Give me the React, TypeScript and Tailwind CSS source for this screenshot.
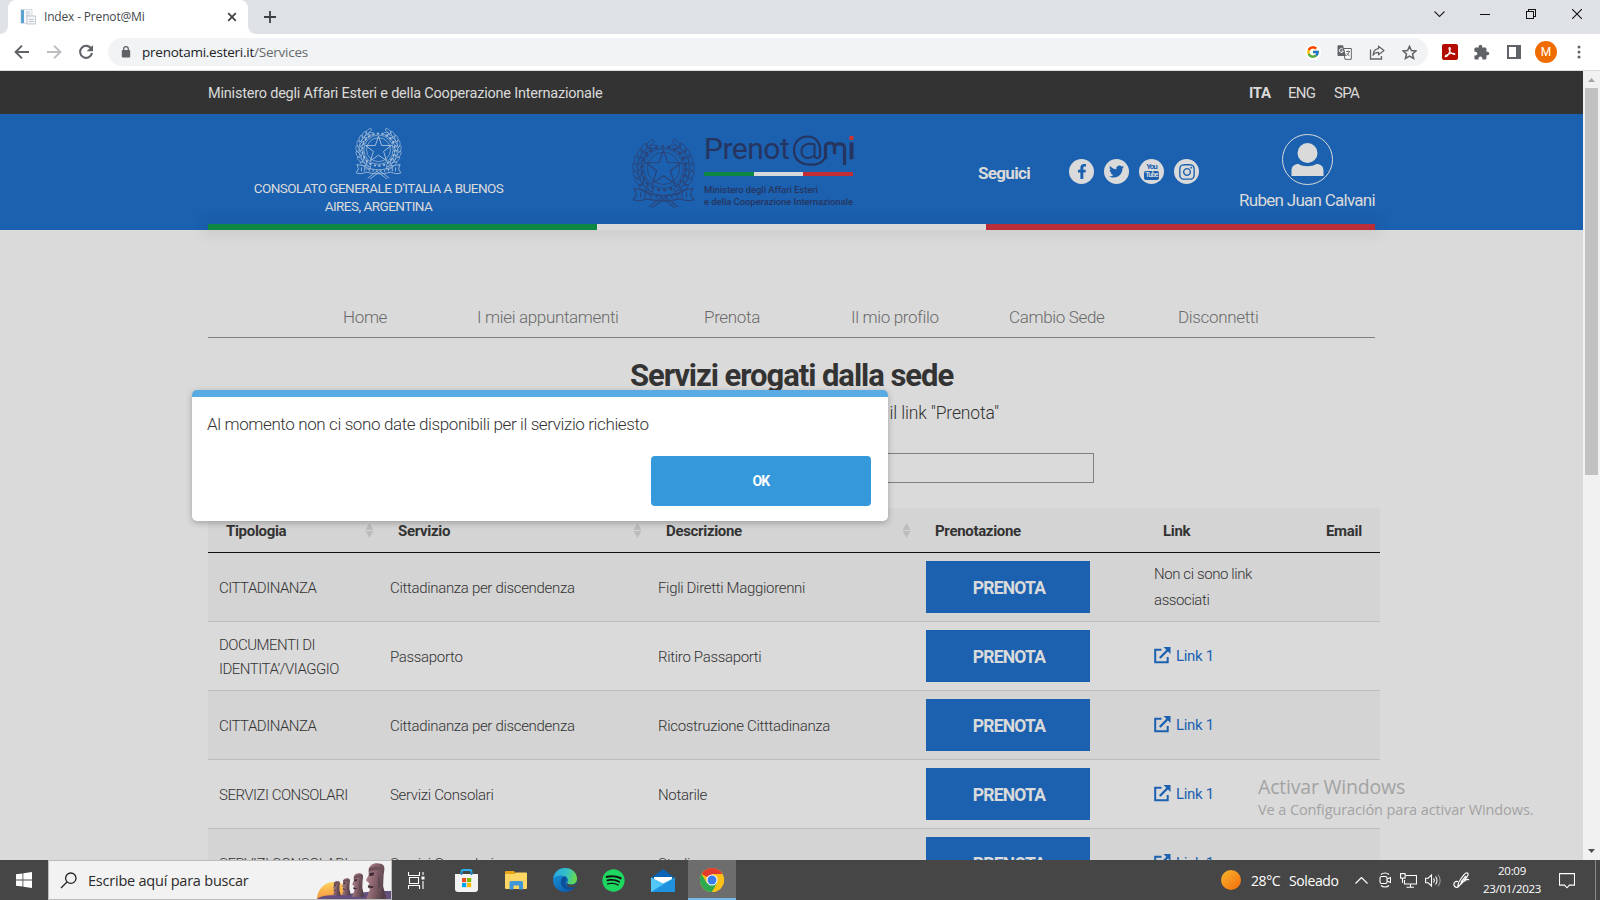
import type { ReactNode } from "react";
import { FaFacebookF, FaTwitter, FaInstagram, FaSpotify } from "react-icons/fa";
import { FcGoogle } from "react-icons/fc";
import { MdExtension } from "react-icons/md";

function BrowserTabs() {
  return (
    <div className="flex h-[34px] shrink-0 items-start bg-[#dee1e6]">
      <div className="flex h-[34px] w-2 items-end bg-white">
        <div className="h-full w-2 rounded-br-lg bg-[#dee1e6]" />
      </div>
      <div className="flex h-[34px] w-[240px] items-center rounded-t-lg bg-white pl-3 pr-[10px]">
        <svg className="h-4 w-4" viewBox="0 0 16 16">
          <rect x="1" y="0.5" width="11" height="14" fill="#f4f6f8" stroke="#c8d0d8" strokeWidth="0.7" />
          <rect x="1" y="1" width="3" height="13" fill="#5ba3d0" />
          <path d="M6 3h4M6 5h4M6 7h3" stroke="#b8c6d4" strokeWidth="0.8" />
          <rect x="7" y="7" width="8.5" height="8" fill="#f4f5f7" stroke="#aeb6c0" strokeWidth="0.7" />
          <path d="M9 10.5h4.5M9 12.5h4.5" stroke="#b0bcc8" strokeWidth="0.8" />
        </svg>
        <span className="ml-2 flex-1 text-[12px] tracking-[-0.17px] text-[#45494d]">Index - Prenot@Mi</span>
        <svg className="mr-[1px] h-[10px] w-[10px]" viewBox="0 0 10 10">
          <path d="M1.2 1.2l7.6 7.6M8.8 1.2L1.2 8.8" stroke="#3c4043" strokeWidth="1.7" />
        </svg>
      </div>
      <div className="h-[34px] w-2 bg-white">
        <div className="h-full w-2 rounded-bl-lg bg-[#dee1e6]" />
      </div>
      <svg className="ml-2 mt-[11px] h-3 w-3" viewBox="0 0 12 12">
        <path d="M6 0v12M0 6h12" stroke="#3c4043" strokeWidth="1.8" />
      </svg>
      <div className="ml-auto flex items-center pr-[18px] pt-[9px]">
        <svg className="mr-[35px] h-[10px] w-[11px]" viewBox="0 0 11 10">
          <path d="M0.5 2.5l5 5 5-5" fill="none" stroke="#222" strokeWidth="1.1" />
        </svg>
        <svg className="mr-[36px] h-[10px] w-[10px]" viewBox="0 0 10 10" shapeRendering="crispEdges">
          <path d="M0 5.5h10" stroke="#111" />
        </svg>
        <svg className="mr-[36px] h-[10px] w-[10px]" viewBox="0 0 10 10" shapeRendering="crispEdges">
          <path d="M0.5 2.5h7v7h-7zM2.5 2.5v-2h7v7h-2" fill="none" stroke="#111" />
        </svg>
        <svg className="h-[10px] w-[10px]" viewBox="0 0 10 10">
          <path d="M0 0l10 10M10 0L0 10" stroke="#111" strokeWidth="1.1" />
        </svg>
      </div>
    </div>
  );
}

function Toolbar() {
  return (
    <div className="flex h-[37px] shrink-0 items-center border-b border-[#dadce0] bg-white">
      <svg className="ml-[14px] h-4 w-4" viewBox="0 0 16 16">
        <path d="M15 8H2M8 1.6L1.6 8 8 14.4" fill="none" stroke="#5f6368" strokeWidth="2" />
      </svg>
      <svg className="ml-4 h-4 w-4" viewBox="0 0 16 16">
        <path d="M1 8h13M8 1.6L14.4 8 8 14.4" fill="none" stroke="#bcbec1" strokeWidth="2" />
      </svg>
      <svg className="ml-4 h-4 w-4" viewBox="0 0 16 16">
        <path d="M13.3 4.8A6 6 0 1 0 14 9" fill="none" stroke="#5f6368" strokeWidth="2.1" />
        <path d="M15 1v6.3H8.7z" fill="#5f6368" />
      </svg>
      <div className="ml-[14px] flex h-7 w-[1320px] items-center rounded-full bg-[#f1f3f4] pl-[13px] pr-[11px]">
        <svg className="h-[12px] w-[10px]" viewBox="0 0 10 12">
          <rect x="0.8" y="4" width="8.4" height="7.6" rx="1" fill="#5f6368" />
          <path d="M2.7 5V3a2.3 2.3 0 0 1 4.6 0v2" fill="none" stroke="#5f6368" strokeWidth="1.3" />
        </svg>
        <span className="ml-[11px] flex-1 text-[13.5px] tracking-[-0.24px] text-[#666a6e]">
          <span className="text-[#202124]">prenotami.esteri.it</span>/Services
        </span>
        <div className="flex h-4 w-4 items-center justify-center rounded-full bg-white">
          <FcGoogle className="h-[14px] w-[14px]" />
        </div>
        <svg className="ml-4 h-[15px] w-[15px]" viewBox="0 0 15 15">
          <path d="M6.5 3.5h7.8v10.8H8z" fill="#fff" stroke="#5f6368" />
          <path d="M0.5 1.2a1 1 0 0 1 1-1H6L9 11H1.5a1 1 0 0 1-1-1z" fill="#5f6368" />
          <path d="M6 4.3A2 2 0 1 0 6.3 6H4.5" fill="none" stroke="#fff" />
          <path d="M9 6.5h4M11 5.5v1M12.3 6.5c-.5 2-1.5 3.3-3 4.2M9.7 8c.8 1.5 1.6 2.2 3 3" fill="none" stroke="#5f6368" strokeWidth="0.9" />
        </svg>
        <svg className="ml-[17px] h-[15px] w-[16px]" viewBox="0 0 16 15">
          <path d="M1.5 4.5v9.5h11v-3" fill="none" stroke="#5f6368" strokeWidth="1.3" />
          <path d="M9.5 1.2l5.5 4.3-5.5 4.3V7.4C7 7.4 5.2 8.1 4 10.2 4.3 6.5 6 4 9.5 3.6z" fill="none" stroke="#5f6368" strokeWidth="1.2" strokeLinejoin="round" />
        </svg>
        <svg className="ml-[17px] h-[15px] w-[15px]" viewBox="0 0 15 15">
          <path d="M7.5 1.3l1.9 4.2 4.6.4-3.5 3 1.1 4.5-4.1-2.4-4.1 2.4 1.1-4.5-3.5-3 4.6-.4z" fill="none" stroke="#5f6368" strokeWidth="1.5" />
        </svg>
      </div>
      <svg className="ml-[14px] h-4 w-4" viewBox="0 0 16 16">
        <rect width="16" height="16" rx="2" fill="#b30b00" />
        <path d="M7.4 3.5c1.3-.5 1 2.3-.2 5.2-1 2.3-2.6 4.3-3.7 4-1.2-.5 1.3-2.4 4.2-3 3-.7 5.5-.4 5.1.5-.4 1-3.2-.5-4.6-2.3C7.2 6.3 6.5 3.9 7.4 3.5z" fill="none" stroke="#fff" strokeWidth="1.1" />
      </svg>
      <MdExtension className="ml-[15px] h-[17px] w-[17px] text-[#5f6368]" />
      <svg className="ml-[17px] h-[14px] w-[14px]" viewBox="0 0 14 14">
        <rect x="1" y="1" width="12" height="12" fill="#fff" stroke="#5f6368" strokeWidth="2" />
        <rect x="9" y="1" width="4" height="12" fill="#5f6368" />
      </svg>
      <div className="ml-[14px] flex h-[22px] w-[22px] items-center justify-center rounded-full bg-[#ef6c00] font-[Roboto] text-[12px] text-white">
        M
      </div>
      <svg className="ml-5 h-[14px] w-1" viewBox="0 0 4 14">
        <circle cx="2" cy="2" r="1.5" fill="#5f6368" />
        <circle cx="2" cy="7" r="1.5" fill="#5f6368" />
        <circle cx="2" cy="12" r="1.5" fill="#5f6368" />
      </svg>
    </div>
  );
}

const LEAVES = [-58, -43, -28, -13, 2, 17, 32, 47, 62];

function Emblem({ className }: { className: string }) {
  return (
    <svg className={className} viewBox="0 0 60 70" fill="none" stroke="currentColor">
      <circle cx="30" cy="32" r="21" strokeWidth="2.2" strokeDasharray="3 3" />
      <circle cx="30" cy="32" r="19" strokeWidth="0.9" />
      <circle cx="30" cy="32" r="15.5" strokeWidth="0.9" />
      <path
        d="M30 14.5l4.1 12 12.7.1-10.2 7.6 3.8 12.1L30 39.1l-10.4 7.2 3.8-12.1-10.2-7.6 12.7-.1z"
        strokeWidth="1.2"
      />
      {LEAVES.map((a) => (
        <g key={a} transform={`rotate(${a} 30 32)`} strokeWidth="0.8">
          <ellipse cx="2.8" cy="32" rx="2" ry="4.6" transform="rotate(-14 2.8 32)" />
          <ellipse cx="7.2" cy="31" rx="1.7" ry="4.2" transform="rotate(24 7.2 31)" />
        </g>
      ))}
      {LEAVES.map((a) => (
        <g key={a} transform={`rotate(${-a} 30 32)`} strokeWidth="0.8">
          <ellipse cx="57.2" cy="32" rx="2" ry="4.6" transform="rotate(14 57.2 32)" />
          <ellipse cx="52.8" cy="31" rx="1.7" ry="4.2" transform="rotate(-24 52.8 31)" />
        </g>
      ))}
      <path
        d="M2 51c4 2 8 0 12 4 10 4 22 4 32 0 4-4 8-2 12-4l-2 6 3 5c-5 2-9 1-13-1-10 3-22 3-32 0-4 2-8 3-13 1l3-5zM16 69l13-10M44 69L31 59M19 70l12-9M41 70l-12-9"
        strokeWidth="1.1"
      />
      <path d="M8 55v5M12 56v4M18 57.5v3M23 58v3M28 58.5v3M33 58.5v3M38 58v3M43 57v3M48 56v4M52 55v5" strokeWidth="1.1" />
    </svg>
  );
}

function PrenotamiLogo() {
  return (
    <div className="flex flex-col text-[#26355f]">
      <div className="flex h-[32px] items-start">
        <span className="mt-[-2px] w-[88px] pl-[-2px] text-[30px] leading-[33px] tracking-[-0.5px]">Prenot</span>
        <svg className="h-[33px] w-[62px]" viewBox="88 0 62 33" fill="none" stroke="#26355f">
          <path d="M121.5 23C118 31 108 31.5 101 30 93 28 90 22 90 16 90 8 96 2.5 103.5 2.5S116 8 116 15v8" strokeWidth="2.2" />
          <path d="M110.5 10.5C103 8.5 97.5 11 97.5 17.5S104 26 110.5 21.5zM110.5 10v11c0 4 5 4 5 1" strokeWidth="2" />
          <path d="M121.5 25V11.5c0-1.5 3-2.5 5-2.5s4 1.5 4 4V20M130.5 12c1.500-2.500 10-4 10 2v17" strokeWidth="3.2" />
          <path d="M147.5 8.5v16.8" strokeWidth="3.8" />
          <rect x="145.5" y="2" width="4" height="4" fill="#d2322d" stroke="none" />
        </svg>
      </div>
      <div className="mt-[6px] grid h-1 w-[149px] grid-cols-3">
        <div className="bg-[#0f8744]" />
        <div className="bg-[#d6d8da]" />
        <div className="bg-[#c32d36]" />
      </div>
      <p className="mt-[8px] whitespace-nowrap text-[9.5px] leading-[12px] font-medium tracking-[-0.08px]">
        Ministero degli Affari Esteri
        <br />e della Cooperazione Internazionale
      </p>
    </div>
  );
}

function Social({ children }: { children: ReactNode }) {
  return (
    <div className="flex h-[25px] w-[25px] items-center justify-center rounded-full bg-[#dadada] text-[#1b61b0]">
      {children}
    </div>
  );
}

function SiteHeader() {
  return (
    <header className="shrink-0">
      <div className="flex h-[43px] items-center bg-[#333333] pl-[208px] pr-[222px] pt-0.5 text-[15px] text-[#dadada]">
        <span className="flex-1 text-[14.5px] tracking-[-0.21px]">Ministero degli Affari Esteri e della Cooperazione Internazionale</span>
        <span className="w-[39px] font-bold tracking-[-0.3px]">ITA</span>
        <span className="w-[46px] tracking-[-0.7px]">ENG</span>
        <span className="w-[27px] tracking-[-0.7px]">SPA</span>
      </div>
      <div className="flex h-[110px] items-start bg-[#1b61b0] pl-[208px] text-[#dadada]">
        <div className="flex w-[341px] flex-col items-center pt-[11px]">
          <Emblem className="h-[54px] w-[47px] text-[#a9c0da]" />
          <p className="w-[270px] text-center text-[13.5px] leading-[18px] tracking-[-0.53px]">
            CONSOLATO GENERALE D'ITALIA A BUENOS AIRES, ARGENTINA
          </p>
        </div>
        <Emblem className="ml-[83px] mt-[21px] h-[73px] w-[63px] text-[#2a4479]" />
        <div className="ml-[9px] mt-[20px] w-[152px]">
          <PrenotamiLogo />
        </div>
        <span className="ml-[122px] mt-[45px] w-[52px] text-[17px] leading-7 font-bold tracking-[-0.67px]">Seguici</span>
        <div className="ml-[39px] mt-[45px] flex w-[130px] justify-between">
          <Social><FaFacebookF className="h-[15px] w-[14px]" /></Social>
          <Social><FaTwitter className="h-[15px] w-[15px]" /></Social>
          <Social>
            <div className="flex w-[15px] flex-col items-center text-[8px] leading-[8px] font-bold tracking-[-1px]">
              <span>You</span>
              <span className="flex h-[9px] w-[15px] items-center justify-center rounded-[2px] bg-[#1b61b0] text-[7px] leading-[9px] tracking-[-0.8px] text-[#dadada]">Tube</span>
            </div>
          </Social>
          <Social><FaInstagram className="h-[18px] w-[18px]" /></Social>
        </div>
        <div className="ml-[40px] flex w-[136px] flex-col items-center pt-[20px]">
          <svg className="h-[51px] w-[51px]" viewBox="0 0 51 51">
            <circle cx="25.5" cy="25.5" r="25" fill="none" stroke="#dadada" />
            <circle cx="25.5" cy="19" r="10" fill="#dadada" />
            <path d="M9.5 42v-5c0-5 3-7 7-7 5 3 13 3 18 0 4 0 7 2 7 7v5z" fill="#dadada" />
          </svg>
          <span className="mt-px text-[17px] leading-7 tracking-[-0.73px] whitespace-nowrap">Ruben Juan Calvani</span>
        </div>
      </div>
      <div className="bg-[#1b61b0] pl-[208px] pr-[208px]">
        <div className="grid h-[6px] grid-cols-3 shadow-[0_0_14px_6px_rgba(0,0,0,0.06)]">
          <div className="bg-[#0f8744]" />
          <div className="bg-[#dadada]" />
          <div className="bg-[#b82e39]" />
        </div>
      </div>
    </header>
  );
}

function SortIcon() {
  return (
    <svg className="mb-0.5 h-[15px] w-[9px]" viewBox="0 0 9 15">
      <path d="M4.5 0L8.5 7h-8zM4.5 15L0.5 8h8z" fill="#bcbcbc" />
    </svg>
  );
}

function LinkOut() {
  return (
    <a className="flex items-center text-[#1b61b0]">
      <svg className="mr-[5px] h-[17px] w-[17px]" viewBox="0 0 17 17" fill="none" stroke="currentColor">
        <path d="M7.5 2.7H1.2v12.6h12.5V10" strokeWidth="2" />
        <path d="M5.8 11L14.5 2.3" strokeWidth="2.3" />
        <path d="M9.5 0h7v7z" fill="currentColor" stroke="none" />
      </svg>
      <span className="pt-0.5 font-normal">Link 1</span>
    </a>
  );
}

const ROWS = [
  { tipo: "CITTADINANZA", servizio: "Cittadinanza per discendenza", desc: "Figli Diretti Maggiorenni", link: false },
  { tipo: "DOCUMENTI DI IDENTITA’/VIAGGIO", servizio: "Passaporto", desc: "Ritiro Passaporti", link: true },
  { tipo: "CITTADINANZA", servizio: "Cittadinanza per discendenza", desc: "Ricostruzione Citttadinanza", link: true },
  { tipo: "SERVIZI CONSOLARI", servizio: "Servizi Consolari", desc: "Notarile", link: true },
  { tipo: "SERVIZI CONSOLARI", servizio: "Servizi Consolari", desc: "Studio", link: true },
];

function ServicesTable() {
  return (
    <div className="ml-[208px] mt-[25px] w-[1172px] text-[15px] tracking-[-0.32px] text-[#333]">
      <div className="grid h-[45px] grid-cols-[171px_268px_269px_228px_163px_73px] items-center border-b border-[#111] bg-[#d4d4d4] pt-0.5 font-bold">
        <div className="flex items-center justify-between pl-[18px] pr-[5px]">Tipologia<SortIcon /></div>
        <div className="flex items-center justify-between pl-[19px] pr-[5px]">Servizio<SortIcon /></div>
        <div className="flex items-center justify-between pl-[19px] pr-[5px]">Descrizione<SortIcon /></div>
        <div className="pl-[19px]">Prenotazione</div>
        <div className="pl-[19px]">Link</div>
        <div className="pl-[19px]">Email</div>
      </div>
      {ROWS.map((r, i) => (
        <div
          key={i}
          className="grid h-[69px] grid-cols-[171px_268px_269px_228px_163px_73px] items-center border-b border-[#bdbdbd] font-light odd:bg-[#dadada] even:bg-[#d4d4d4]"
        >
          <div className="pl-[11px] pr-[30px] pt-0.5 leading-6 tracking-[-0.5px]">
            {r.tipo === "SERVIZI CONSOLARI" ? <span className="whitespace-nowrap">{r.tipo}</span> : r.tipo}
          </div>
          <div className="pl-[11px] pt-0.5">{r.servizio}</div>
          <div className="pl-[11px] pt-0.5">{r.desc}</div>
          <div className="pl-[10px]">
            <div className="flex h-[52px] w-[164px] items-center justify-center bg-[#1b61b0] pl-0.5 pt-0.5 text-[17.5px] font-bold tracking-[-0.8px] text-[#dadada]">
              PRENOTA
            </div>
          </div>
          <div className="pl-[10px]">
            {r.link ? (
              <div className="pb-0.5"><LinkOut /></div>
            ) : (
              <p className="w-[110px] leading-[26px] tracking-[-0.4px]">Non ci sono link associati</p>
            )}
          </div>
          <div />
        </div>
      ))}
    </div>
  );
}

function Page() {
  return (
    <div className="flex h-[789px] shrink-0 overflow-hidden font-[Roboto,sans-serif]">
      <main className="flex h-full w-[1583px] flex-col overflow-hidden bg-[#dadada]">
        <SiteHeader />
        <nav className="ml-[208px] mt-[66px] flex h-[42px] w-[1167px] shrink-0 items-center border-b border-[#808080] pl-[135px] pt-[3px] text-[17px] font-light tracking-[-0.34px] text-[#6a6a6a]">
          <span className="w-[134px]">Home</span>
          <span className="w-[227px]">I miei appuntamenti</span>
          <span className="w-[147px]">Prenota</span>
          <span className="w-[158px]">Il mio profilo</span>
          <span className="w-[169px]">Cambio Sede</span>
          <span>Disconnetti</span>
        </nav>
        <h1 className="ml-[208px] mt-[18px] w-[1167px] shrink-0 text-center text-[31px] leading-[40px] font-bold tracking-[-1.05px] text-[#333]">
          Servizi erogati dalla sede
        </h1>
        <p className="mr-[584px] mt-[3px] shrink-0 text-right text-[17.5px] leading-7 font-light tracking-[-0.15px] text-[#333]">
          il link "Prenota"
        </p>
        <div className="ml-[490px] mt-[26px] h-[30px] w-[604px] shrink-0 border border-[#808080]" />
        <ServicesTable />
      </main>
      <div className="flex w-[17px] flex-col items-center bg-[#f1f1f1] py-[7px]">
        <svg className="h-1 w-[7px] shrink-0" viewBox="0 0 7 4"><path d="M3.5 0L7 4H0z" fill="#a3a3a3" /></svg>
        <div className="mt-[6px] h-[387px] w-[13px] shrink-0 bg-[#c1c1c1]" />
        <svg className="mt-auto h-1 w-[7px] shrink-0" viewBox="0 0 7 4"><path d="M3.5 4L7 0H0z" fill="#505050" /></svg>
      </div>
    </div>
  );
}

function Moai() {
  return (
    <svg className="h-[38px] w-[76px]" viewBox="0 0 76 38">
      <defs>
        <linearGradient id="sunset" x1="0" y1="0" x2="0" y2="1">
          <stop offset="0" stopColor="#ffd35c" />
          <stop offset="0.6" stopColor="#f58a3c" />
        </linearGradient>
        <linearGradient id="stone" x1="0" y1="0" x2="1" y2="0.3">
          <stop offset="0" stopColor="#b58a95" />
          <stop offset="0.5" stopColor="#8a646c" />
          <stop offset="1" stopColor="#54404a" />
        </linearGradient>
        <g id="moai">
          <path d="M5 11C4 8 5 3 8 1.5 12 -0.5 18 0 20 2.5c1.5 2 0.5 6 0 9l-.5 11L23 36H2l4-10-2-3 1.5-3-3.5-3z" fill="url(#stone)" />
          <path d="M5 5c3-2 10-2 15-1v4C14 6 8 7 5 9z" fill="#6d5058" />
          <path d="M5 10l5-1v3l-4 1zM4 22l6 1-1 1.5-5-.5z" fill="#3d2a33" />
          <path d="M15 9l2 13-3 4z" fill="#5e454e" />
        </g>
      </defs>
      <circle cx="19" cy="38" r="17" fill="url(#sunset)" />
      <path d="M2 38c4-4 14-4 26-4 16-3 34-4 48-4v8z" fill="#64507c" />
      <use href="#moai" transform="translate(17 20) scale(0.38 0.4)" />
      <use href="#moai" transform="translate(26 17) scale(0.43 0.48)" />
      <use href="#moai" transform="translate(36 12) scale(0.58 0.66)" />
      <use href="#moai" transform="translate(49 2) scale(0.98 1.02)" />
    </svg>
  );
}

function Taskbar() {
  return (
    <footer className="flex h-10 shrink-0 items-center bg-[#464646] text-white">
      <div className="flex w-12 justify-center">
        <svg className="h-4 w-4" viewBox="0 0 16 16" fill="#fff">
          <path d="M0 2.3L6.5 1.4v6.1H0zM7.3 1.3L16 0v7.5H7.3zM0 8.4h6.5v6.2L0 13.7zM7.3 8.4H16V16l-8.7-1.2z" />
        </svg>
      </div>
      <div className="flex h-10 w-[344px] items-center border border-[#bdbdbd] bg-[#f2f2f2] pl-[11px]">
        <svg className="h-[17px] w-[17px]" viewBox="0 0 17 17" fill="none" stroke="#222" strokeWidth="1.3">
          <circle cx="10.8" cy="6.2" r="5.2" />
          <path d="M7 10L1 16" />
        </svg>
        <span className="ml-[11px] flex-1 pt-0.5 text-[14.5px] tracking-[-0.22px] text-[#2b2b2b]">Escribe aquí para buscar</span>
        <Moai />
      </div>
      <div className="flex h-10 w-12 items-center justify-center">
        <svg className="h-[17px] w-[17px]" viewBox="0 0 17 17" fill="none" stroke="#fff" strokeWidth="1.1">
          <path d="M0.5 0v3.5h11V0M0.5 17v-3.5h11V17M1.5 5.5h9v6h-9zM15 0v3M15 9v8" />
          <rect x="13.5" y="4.5" width="3" height="3" fill="#fff" stroke="none" />
        </svg>
      </div>
      <div className="flex h-10 w-[52px] items-center justify-center">
        <svg className="h-[23px] w-[23px]" viewBox="0 0 23 23">
          <path d="M6.5 5.5v-3a1.5 1.5 0 0 1 1.5-1.5h7a1.5 1.5 0 0 1 1.5 1.5v3" fill="none" stroke="#29b0ee" strokeWidth="1.8" />
          <path d="M0 5h23v15a3 3 0 0 1-3 3H3a3 3 0 0 1-3-3z" fill="#f3f3f3" />
          <path d="M6.5 3v3M16.5 3v3" stroke="#1a86c9" strokeWidth="1.6" />
          <rect x="7" y="9" width="4.2" height="4.2" fill="#f25022" />
          <rect x="12" y="9" width="4.2" height="4.2" fill="#7fba00" />
          <rect x="7" y="14" width="4.2" height="4.2" fill="#00a4ef" />
          <rect x="12" y="14" width="4.2" height="4.2" fill="#ffb900" />
        </svg>
      </div>
      <div className="flex h-10 w-[48px] items-center justify-center">
        <svg className="h-[19px] w-[22px]" viewBox="0 0 22 19">
          <path d="M0 1a1 1 0 0 1 1-1h8l1.5 2H22v4H0z" fill="#e8a317" />
          <path d="M0 3h9.5L11 1.5h10a1 1 0 0 1 1 1V17a1 1 0 0 1-1 1H1a1 1 0 0 1-1-1z" fill="#fdd663" />
          <path d="M4.5 18.5V11.5a1.5 1.5 0 0 1 1.5-1.5h10.5a1.5 1.5 0 0 1 1.5 1.5v7h-4v-4H8.5v4z" fill="#3f97da" />
        </svg>
      </div>
      <div className="flex h-10 w-[49px] items-center justify-center">
        <svg className="h-6 w-6" viewBox="0 0 24 24">
          <defs>
            <linearGradient id="edgeTop" x1="0" y1="0.3" x2="1" y2="0.5">
              <stop offset="0" stopColor="#2aa6e0" />
              <stop offset="0.55" stopColor="#35c1c5" />
              <stop offset="1" stopColor="#6bdc45" />
            </linearGradient>
            <linearGradient id="edgeLow" x1="0" y1="0" x2="0.8" y2="1">
              <stop offset="0" stopColor="#1b9de2" />
              <stop offset="1" stopColor="#0b55a5" />
            </linearGradient>
          </defs>
          <circle cx="12" cy="12" r="12" fill="url(#edgeLow)" />
          <path d="M0.3 10C1.5 4 6 0 12 0c7 0 12 5 12 10.5 0 4-3 6-6 6-2.5 0-4.5-1-3.6-2.3 1.6-2.6 0-5.7-3.4-6.2C6.5 7 2 8 0.3 10z" fill="url(#edgeTop)" />
          <path d="M11 8.5c-4 2-4.5 8 0 11.5 4 2.5 8.5 1.5 11.5-1-4 1.5-7.5.5-9.5-2-1.3-1.7-.8-3 .5-4.5.5-2-.5-4-2.5-4z" fill="#0c4f98" />
          <path d="M24 13.5c-1 2.2-3.5 3.5-6 3.3-2.3-.2-4-1.3-3.5-2.4-1.5 2 0 4.6 3.5 5 1.8.2 3.5-.2 4.5-.8z" fill="#464646" />
        </svg>
      </div>
      <div className="flex h-10 w-[49px] items-center justify-center">
        <div className="flex h-[21px] w-[21px] items-center justify-center rounded-full bg-[#111]">
          <FaSpotify className="h-[23px] w-[23px] shrink-0 text-[#1ed760]" />
        </div>
      </div>
      <div className="flex h-10 w-[50px] items-center justify-center">
        <svg className="h-[23px] w-[24px]" viewBox="0 0 24 23">
          <path d="M0 9L12 0l12 9z" fill="#0a64b5" />
          <path d="M3 8h18v8H3z" fill="#fff" />
          <path d="M0 8.5l12 6 12-6V23H0z" fill="#36b5f0" />
          <path d="M0 23l24-14.5V23z" fill="#1f93e0" />
          <path d="M0 8.5L12 15l-12 8z" fill="#53c7f7" />
        </svg>
      </div>
      <div className="flex h-10 w-12 items-center justify-center border-b-2 border-[#76b9ed] bg-[#6d6d6d] pt-0.5">
        <svg className="h-6 w-6" viewBox="0 0 24 24">
          <circle cx="12" cy="12" r="12" fill="#fbc116" />
          <path d="M12 12L1.6 6A12 12 0 0 1 22.4 6H12z" fill="#e33b2e" />
          <path d="M1.6 6A12 12 0 0 0 12 24l5.2-9L12 12l-5.2 3z" fill="#2da94f" />
          <path d="M12 6h10.4A12 12 0 0 1 12 24l5.2-9z" fill="#fbc116" />
          <circle cx="12" cy="12" r="5.6" fill="#fff" />
          <circle cx="12" cy="12" r="4.5" fill="#3a7de9" />
        </svg>
      </div>
      <div className="ml-[485px] h-5 w-5 rounded-full bg-linear-to-br from-[#f6b52c] to-[#f26a0a]" />
      <span className="ml-[10px] w-[38px] pt-px text-[14px] tracking-[-0.4px]">28°C</span>
      <span className="w-[66px] pt-px text-[14px] tracking-[-0.4px]">Soleado</span>
      <svg className="h-[7px] w-[13px]" viewBox="0 0 13 7">
        <path d="M0.5 6.5l6-6 6 6" fill="none" stroke="#fff" strokeWidth="1.2" />
      </svg>
      <svg className="ml-[11px] h-[16px] w-[12px]" viewBox="0 0 12 16" fill="none" stroke="#fff" strokeWidth="1.1">
        <path d="M2 2.5C4 0.5 8 0.5 10 2.5M2 13.5c2 2 6 2 8 0" />
        <rect x="1" y="4.5" width="7" height="7" rx="1.5" />
        <path d="M8 7l3.5-1.5v5L8 9" />
      </svg>
      <svg className="ml-[9px] h-[15px] w-[17px]" viewBox="0 0 17 15" fill="none" stroke="#fff" strokeWidth="1.1">
        <path d="M5.5 2.5h11v8.5h-12V7M10.5 11v3M6.5 14.2h7.5M2.5 5v5" />
        <rect x="0.6" y="0.6" width="4.5" height="4.5" />
      </svg>
      <svg className="ml-[8px] h-[15px] w-[16px]" viewBox="0 0 16 15" fill="none" stroke="#fff" strokeWidth="1.1">
        <path d="M0.6 5.2h2.5L6.5 2v11L3.1 9.8H0.6z" />
        <path d="M8.5 5.5c1 1 1 3 0 4M10.5 3.5c2 2.2 2 5.8 0 8" />
        <path d="M12.8 1.5c3.2 3.5 3.2 8.5 0 12" stroke="#9a9a9a" />
      </svg>
      <svg className="ml-[12px] h-[17px] w-[17px]" viewBox="0 0 17 17" fill="none" stroke="#fff" strokeWidth="1.2">
        <path d="M5 13c0-3 6-11 8-12 1.5-.5 2.5.5 2 2-1 2.5-7 10-10 11zM5 9.5C2 9 0.5 11 1 13s2.5 3 4 2c2-1.2 3-3 4.5-6.5M11 9.5c2-2 4-2.500 5-1.500M8 10L13 4" />
      </svg>
      <div className="ml-[12px] flex w-[60px] flex-col items-center text-[11.5px] leading-[18px] tracking-[-0.3px]">
        <span>20:09</span>
        <span>23/01/2023</span>
      </div>
      <svg className="ml-[17px] mt-px h-4 w-4" viewBox="0 0 16 16">
        <path d="M0.5 0.6h15v11.5h-5L8 14.8l-2.5-2.700h-5z" fill="none" stroke="#fff" strokeWidth="1.1" />
      </svg>
      <div className="ml-auto mr-1 h-10 w-px bg-[#8a8a8a]" />
    </footer>
  );
}

export default function App() {
  return (
    <div className="relative flex h-[900px] w-[1600px] flex-col overflow-hidden font-['Open_Sans',sans-serif]">
      <BrowserTabs />
      <Toolbar />
      <Page />
      <Taskbar />

      <div
        role="dialog"
        className="absolute left-[192px] top-[390px] flex h-[131px] w-[696px] flex-col overflow-hidden rounded-[5px] border-t-[7px] border-[#5aabe3] bg-white px-[15px] pt-[13px] font-[Roboto,sans-serif] shadow-[0_2px_6px_rgba(0,0,0,0.25)]"
      >
        <p className="text-[17px] leading-7 font-light tracking-[-0.38px] text-[#333]">
          Al momento non ci sono date disponibili per il servizio richiesto
        </p>
        <button className="mr-[2px] mt-[18px] h-[50px] w-[220px] self-end rounded-[4px] bg-[#3498db] text-[14px] font-bold tracking-[-0.8px] text-white">
          OK
        </button>
      </div>

      <div className="pointer-events-none absolute left-[1258px] top-[774px] text-[#a3a3a3]">
        <p className="text-[19.5px] leading-[26px] tracking-[-0.2px]">Activar Windows</p>
        <p className="text-[14.5px] leading-5 tracking-[-0.1px]">Ve a Configuración para activar Windows.</p>
      </div>
    </div>
  );
}
